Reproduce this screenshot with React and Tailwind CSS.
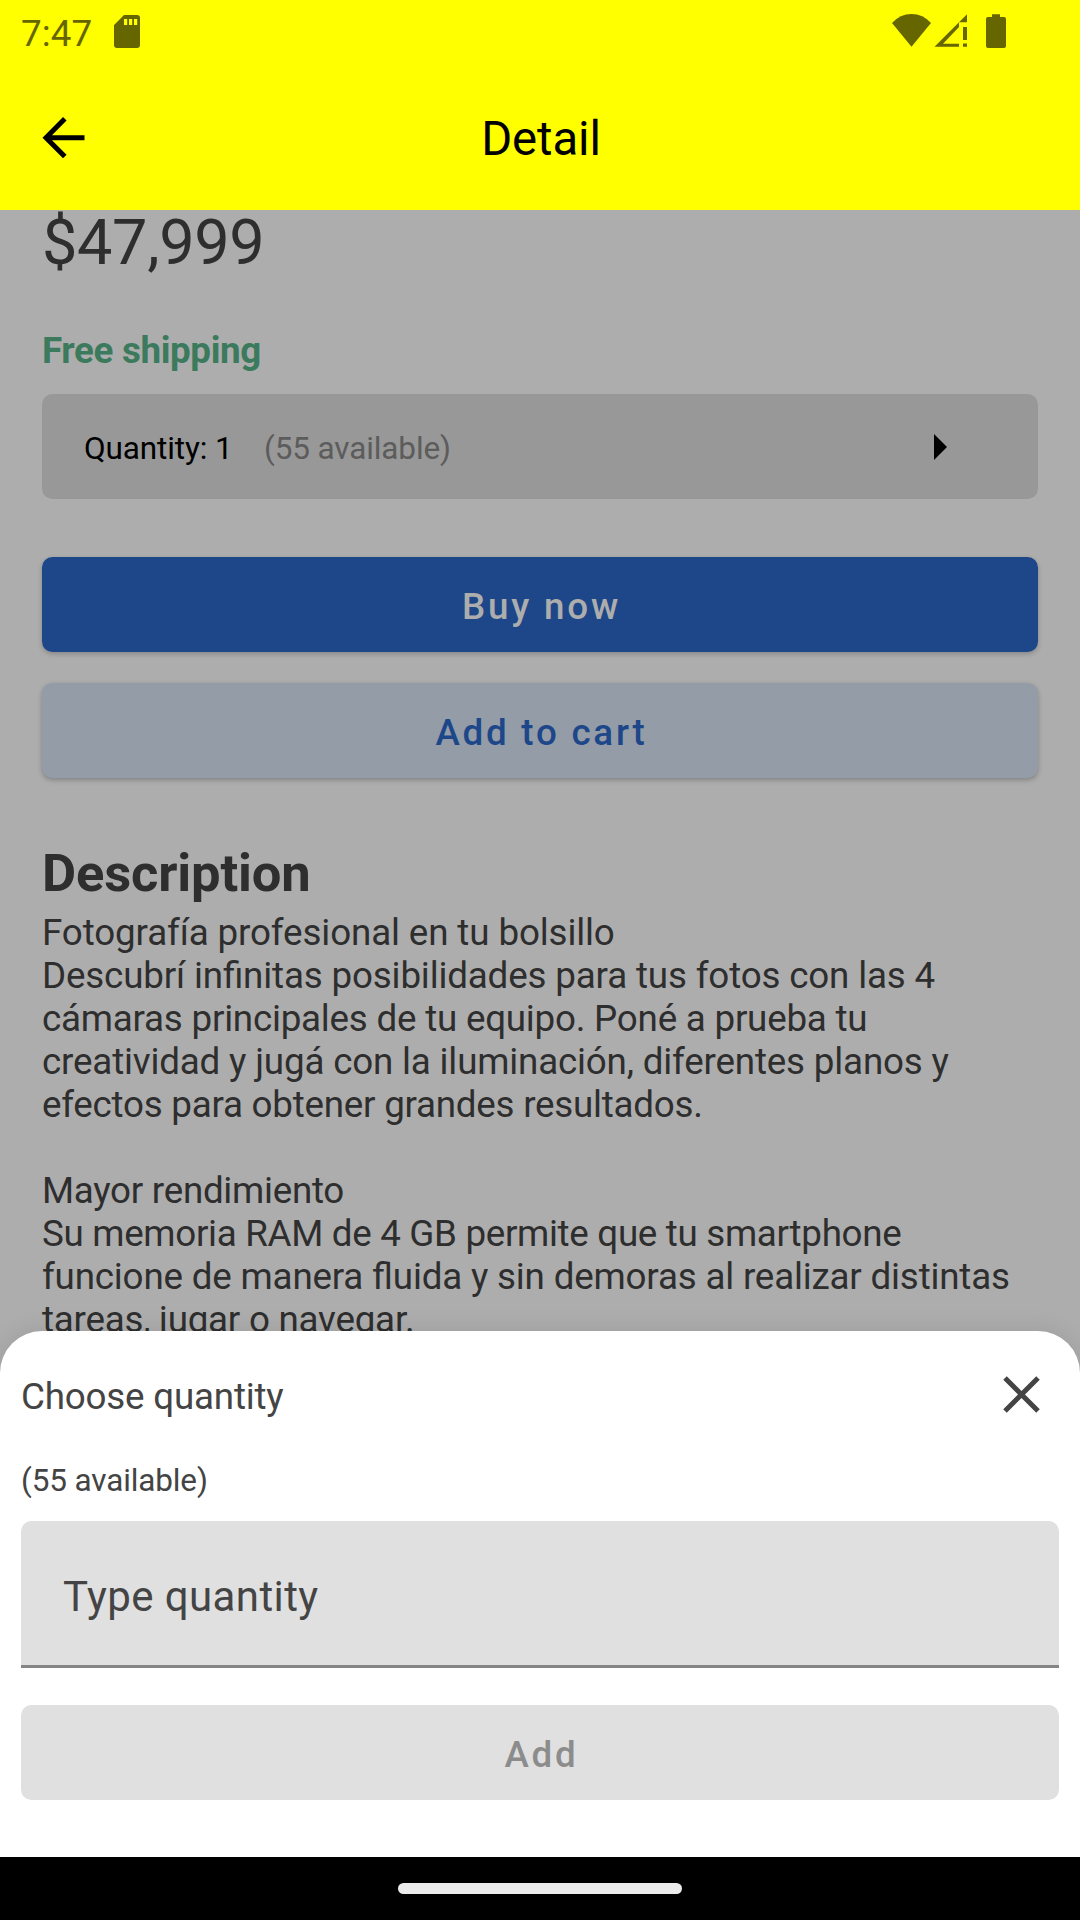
const description = [
  { text: 'Fotografía profesional en tu bolsillo', tracking: 'tracking-[-0.12px]' },
  { text: 'Descubrí infinitas posibilidades para tus fotos con las 4', tracking: 'tracking-[-0.155px]' },
  { text: 'cámaras principales de tu equipo. Poné a prueba tu', tracking: 'tracking-[-0.22px]' },
  { text: 'creatividad y jugá con la iluminación, diferentes planos y', tracking: 'tracking-[-0.17px]' },
  { text: 'efectos para obtener grandes resultados.', tracking: 'tracking-[-0.24px]' },
  { text: '', tracking: '' },
  { text: 'Mayor rendimiento', tracking: 'tracking-[-0.27px]' },
  { text: 'Su memoria RAM de 4 GB permite que tu smartphone', tracking: 'tracking-[-0.31px]' },
  { text: 'funcione de manera fluida y sin demoras al realizar distintas', tracking: 'tracking-[-0.18px]' },
  { text: 'tareas, jugar o navegar.', tracking: 'tracking-[-0.23px]' },
];

function StatusBar() {
  return (
    <div className="flex h-[63px] items-start justify-between pl-[21px] pr-[73px] text-[#666600]">
      <div className="flex items-start">
        <span className="mt-[12px] w-[93px] text-[36.75px] leading-[43px] tracking-[0.1px]">7:47</span>
        <svg className="mt-[15px] h-[33px] w-[26px]" viewBox="0 0 26 33" fill="currentColor">
          <path
            fillRule="evenodd"
            d="M10 0H23Q26 0 26 3V30Q26 33 23 33H3Q0 33 0 30V10ZM10 4V10H13.2V4ZM15 4V10H18.2V4ZM20 4V10H23.2V4Z"
          />
        </svg>
      </div>
      <div className="mt-[14px] flex h-[34px] items-start">
        <svg className="h-[34px] w-[115px]" viewBox="892 14 115 34" fill="currentColor">
          <path d="M892 23Q900 14 911.500 14Q923 14 931 23L911.500 46.700Z" />
          <path
            fillRule="evenodd"
            d="M934.500 46.700L967 14.300V22.300H959V27L943 43.700H959V46.700Z M963 27H967V40H963Z M963 43.500H967V46.700H963Z"
          />
          <path d="M992 14.200H1000V17H1004Q1006 17 1006 19V46Q1006 48 1004 48H988Q986 48 986 46V19Q986 17 988 17H992Z" />
        </svg>
      </div>
    </div>
  );
}

function AppBar() {
  return (
    <div className="grid h-[147px] grid-cols-3 items-center px-[42px] text-black">
      <svg className="h-[42px] w-[43px]" viewBox="0 0 43 42" fill="none" stroke="currentColor" strokeWidth="5">
        <path d="M42.500 21.700H4M22.800 2.800L4 21.700L22.800 40.500" />
      </svg>
      <h1 className="ml-[2px] mt-[5px] text-center text-[47.25px] leading-[55px] tracking-[-0.1px]">Detail</h1>
    </div>
  );
}

function ProductDetail() {
  return (
    <main className="h-[1160px] bg-[#adadad] px-[42px] text-[#2e2e2e]">
      <p className="h-[66px] text-[63px] leading-[66px] tracking-[-0.35px]">$47,999</p>
      <p className="mt-[53px] text-[36.75px] font-bold leading-[43px] tracking-[-0.35px] text-[#3b7a5c]">
        Free shipping
      </p>
      <button className="mt-[22px] flex h-[105px] w-full items-center rounded-[10.5px] bg-[#989898] pl-[42px] pr-[91px] text-[31.5px] leading-[37px] tracking-[-0.12px]">
        <span className="mt-[4px] w-[180px] text-left text-black">Quantity: 1</span>
        <span className="mt-[4px] text-[#5c5c5c]">(55 available)</span>
        <svg className="ml-auto h-[26px] w-[13px]" viewBox="0 0 13 26">
          <path d="M0 0L13 13L0 26Z" />
        </svg>
      </button>
      <button className="mt-[58px] flex h-[95px] w-full items-center justify-center rounded-[10.5px] bg-[#1d4789] pl-[3px] pt-[4px] text-[36.75px] font-medium tracking-[2.8px] text-[#adadad] shadow-[0_2px_5px_rgba(0,0,0,0.22)]">
        Buy now
      </button>
      <button className="mt-[31px] flex h-[95px] w-full items-center justify-center rounded-[10.5px] bg-[#939ca7] pl-[3px] pt-[4px] text-[36.75px] font-medium tracking-[2.75px] text-[#1d4789] shadow-[0_2px_5px_rgba(0,0,0,0.25)]">
        Add to cart
      </button>
      <h2 className="mt-[64px] text-[52.5px] font-bold leading-[62px] tracking-[-0.15px]">Description</h2>
      <div className="mt-[7px] text-[36.75px] leading-[43px] [font-feature-settings:'liga']">
        {description.map((line, index) => (
          <p key={index} className={`h-[43px] whitespace-nowrap ${line.tracking}`}>
            {line.text}
          </p>
        ))}
      </div>
    </main>
  );
}

function QuantitySheet() {
  return (
    <section className="relative -mt-[39px] h-[526px] rounded-t-[42px] bg-white px-[21px] pt-[43px] text-[#444444] shadow-[0_0_24px_rgba(0,0,0,0.1)]">
      <div className="flex h-[44px] items-start justify-between pr-[19px]">
        <h3 className="mt-[1px] text-[36.75px] leading-[43px] tracking-[-0.2px]">Choose quantity</h3>
        <svg className="mt-[2px] h-[37px] w-[37px]" viewBox="0 0 37 37" fill="none" stroke="currentColor" strokeWidth="5">
          <path d="M2 2L35 35M35 2L2 35" />
        </svg>
      </div>
      <p className="mt-[44px] text-[31.5px] leading-[37px] tracking-[-0.13px]">(55 available)</p>
      <div className="mt-[22px] flex h-[147px] items-center rounded-t-[10.5px] border-b-[3px] border-[#858585] bg-[#e0e0e0] pl-[42px] pt-[7px] text-[42px] tracking-[0.4px]">
        Type quantity
      </div>
      <button className="mt-[37px] flex h-[95px] w-full items-center justify-center rounded-[10.5px] bg-[#e0e0e0] pl-[3px] pt-[4px] text-[36.75px] font-medium tracking-[2.75px] text-[#8c8c8c]">
        Add
      </button>
    </section>
  );
}

export default function App() {
  return (
    <div className="h-[1920px] w-[1080px] overflow-hidden bg-[#adadad] font-['Roboto',sans-serif]">
      <header className="relative bg-[#ffff00]">
        <StatusBar />
        <AppBar />
      </header>
      <ProductDetail />
      <QuantitySheet />
      <footer className="relative flex h-[63px] justify-center bg-black pt-[26px]">
        <div className="h-[11px] w-[284px] rounded-full bg-[#ebebeb]" />
      </footer>
    </div>
  );
}
